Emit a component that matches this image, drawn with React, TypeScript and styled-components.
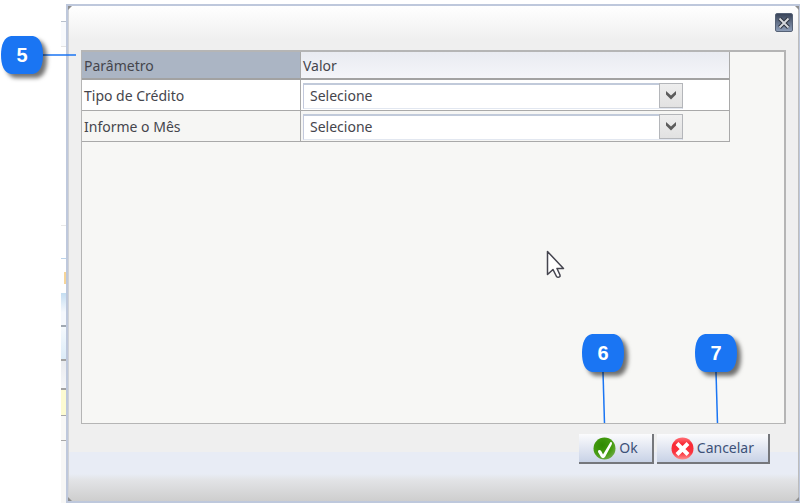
import React from "react";
import styled, { createGlobalStyle } from "styled-components";

const GlobalStyle = createGlobalStyle`
  *, *::before, *::after { box-sizing: border-box; }
  body {
    margin: 0;
    background: #ffffff;
    color: #45454c;
    font-family: "Noto Sans", "Open Sans", sans-serif;
    font-size: 14px;
    line-height: 20px;
  }
  button, select { font: inherit; color: inherit; }
`;

const Page = styled.div`
  position: relative;
  display: flex;
  min-height: 100vh;
  padding-left: 61px;
  overflow: hidden;
`;

const Backdrop = styled.div`
  display: flex;
  flex-direction: column;
  flex: 0 0 5px;
`;

const Slice = styled.div<{ $height?: number; $fill: string; $edge: string; $weight?: number }>`
  ${(p) => (p.$height ? `flex: 0 0 ${p.$height}px;` : "flex: 1;")}
  background: ${(p) => p.$fill};
  border-bottom: ${(p) => p.$weight ?? 1}px solid ${(p) => p.$edge};
`;

const DialogFrame = styled.section`
  position: relative;
  display: flex;
  flex-direction: column;
  flex: 1;
  min-width: 0;
  margin-top: 4px;
  border: solid #bec8dc;
  border-width: 2px 1px 2px 2px;
  box-shadow: inset 1px 0 #d0d2d6, inset -1px 0 #bdbdbd;
  background:
    linear-gradient(#ffffff, #efefef) top / 100% 34px no-repeat,
    linear-gradient(#e8ecf5, #e8ecf5 22px, #e2e3e6 28px, #cecece) bottom / 100% 49px no-repeat,
    #efefef;
`;

const DialogHeader = styled.header`
  display: flex;
  justify-content: flex-end;
  height: 44px;
  padding: 7px 6px;
`;

const CloseButton = styled.button`
  display: grid;
  place-items: center;
  width: 18px;
  height: 19px;
  padding: 0;
  border: 1px solid #566276;
  border-radius: 2px;
  background: linear-gradient(#394459, #8d9db7);
`;

const Panel = styled.div`
  flex: 1;
  margin: 0 13px;
  border: solid #b5b5b5;
  border-width: 2px 2px 1px 1px;
  background: #f7f7f5;
`;

const ParamTable = styled.table`
  width: calc(100% - 54px);
  border-collapse: separate;
  border-spacing: 0;
  table-layout: fixed;
`;

const HeadCell = styled.th<{ $selected?: boolean }>`
  width: ${(p) => (p.$selected ? "219px" : "auto")};
  height: 28px;
  padding: 2px 2px 0;
  border-right: 1px solid #a9a9a9;
  border-bottom: 2px solid #a2a2a2;
  background: ${(p) => (p.$selected ? "#abb5c4" : "linear-gradient(#e9ebf1, #f4f5f9)")};
  font-weight: 400;
  text-align: left;
`;

const Row = styled.tr<{ $plain?: boolean }>`
  background: ${(p) => (p.$plain ? "#f6f6f4" : "#ffffff")};
`;

const Cell = styled.td`
  height: 31px;
  padding: 2px 2px 1px;
  border-right: 1px solid #a9a9a9;
  border-bottom: 1px solid #a9a9a9;
`;

const SelectShell = styled.div`
  display: grid;
  grid-template-columns: 1fr 24px;
  width: calc(100% - 44px);
  height: 26px;
`;

const Select = styled.select`
  grid-area: 1 / 1 / 2 / 3;
  min-width: 0;
  height: 26px;
  padding: 0 28px 0 6px;
  border: 1px solid #c3c9dc;
  border-top: 2px solid #c1cada;
  border-bottom-color: #e2e7f0;
  border-radius: 0;
  background: #ffffff;
  appearance: none;
`;

const SelectArrow = styled.span`
  grid-area: 1 / 2 / 2 / 3;
  z-index: 1;
  display: grid;
  place-items: center;
  height: 25px;
  border: 1px solid #b4b6ba;
  background: linear-gradient(#eeeeee, #e2e2e2);
  pointer-events: none;
`;

const DialogFooter = styled.footer`
  display: flex;
  justify-content: flex-end;
  gap: 3px;
  padding: 10px 29px 37px;
`;

const ActionButton = styled.button`
  display: flex;
  align-items: center;
  gap: 3px;
  height: 30px;
  padding: 0 14px;
  border: solid #75777c;
  border-width: 0 2px 2px 0;
  background: linear-gradient(#fbfbfd, #c8d2e6);
  color: #3d5178;
`;

const Corner = styled.svg<{ $right?: boolean; $bottom?: boolean }>`
  position: absolute;
  ${(p) => (p.$right ? "right: 0;" : "left: 0;")}
  ${(p) => (p.$bottom ? "bottom: 0;" : "top: 0;")}
  transform: scale(${(p) => (p.$right ? -1 : 1)}, ${(p) => (p.$bottom ? -1 : 1)});
`;

const Callout = styled.div<{ $top: number; $left?: number; $right?: number; $across?: boolean }>`
  position: absolute;
  top: ${(p) => p.$top}px;
  ${(p) => (p.$right !== undefined ? `right: ${p.$right}px;` : `left: ${p.$left}px;`)}
  display: flex;
  flex-direction: ${(p) => (p.$across ? "row" : "column")};
  align-items: center;
  pointer-events: none;
`;

const Badge = styled.span`
  display: grid;
  place-items: center;
  width: 42px;
  height: 38px;
  color: #ffffff;
  font: 700 20px/24px "Liberation Sans", Arial, sans-serif;

  > * { grid-area: 1 / 1; }
  > svg { overflow: visible; filter: drop-shadow(4px 4px 2px rgba(0, 0, 0, 0.55)); }
  > span { z-index: 1; }
`;

const Pointer = styled.svg`
  position: absolute;
  top: 250px;
  right: 235px;
  pointer-events: none;
`;

function CornerMark(props: { right?: boolean; bottom?: boolean }) {
  return (
    <Corner $right={props.right} $bottom={props.bottom} width="5" height="5" aria-hidden="true">
      <path d="M0 0H4L0 4Z" fill="#8e8e8e" />
    </Corner>
  );
}

function Marker({ label }: { label: string }) {
  return (
    <Badge>
      <svg width="42" height="38" aria-hidden="true">
        <path d="M10 0H32C39 1 42 9 42 19S39 37 32 38H10C3 37 0 29 0 19S3 1 10 0Z" fill="#1a75f3" />
      </svg>
      <span>{label}</span>
    </Badge>
  );
}

function OkIcon() {
  return (
    <svg width="23" height="23" viewBox="0 0 23 23" aria-hidden="true">
      <defs>
        <radialGradient id="green" cx="0.4" cy="0.35" r="0.65">
          <stop offset="0" stopColor="#2f8a00" />
          <stop offset="0.7" stopColor="#469c12" />
          <stop offset="1" stopColor="#67a83c" />
        </radialGradient>
      </defs>
      <circle cx="11.5" cy="11.5" r="11" fill="url(#green)" />
      <path d="M17.500 5C19 4.500 19.500 6 18.500 8L12 20C11 21.500 9 21.500 8 20L5 15C5 12.500 7 12.500 8.500 14.500L10 17.500Z" fill="#fff" />
    </svg>
  );
}

function CancelIcon() {
  return (
    <svg width="23" height="23" viewBox="0 0 23 23" aria-hidden="true">
      <defs>
        <linearGradient id="red" x1="0" y1="0" x2="0" y2="1">
          <stop offset="0" stopColor="#ff7077" />
          <stop offset="0.3" stopColor="#f92834" />
          <stop offset="0.7" stopColor="#fa3540" />
          <stop offset="1" stopColor="#ff9090" />
        </linearGradient>
      </defs>
      <circle cx="11.5" cy="11.5" r="11" fill="url(#red)" />
      <path d="M6 6.500L17 17.500M17 6.500L6 17.500" stroke="#fff" strokeWidth="4" />
    </svg>
  );
}

const params = [
  { id: "tipo-credito", label: "Tipo de Crédito" },
  { id: "informe-mes", label: "Informe o Mês" },
];

export default function App() {
  return (
    <>
      <GlobalStyle />
      <Page>
        <Backdrop aria-hidden="true">
          <Slice $height={22} $fill="#ffffff" $edge="#b8c0cc" />
          <Slice $height={25} $fill="#f8fafd" $edge="#e4e4e4" />
          <Slice $height={179} $fill="#ffffff" $edge="#e8e8e8" />
          <Slice $height={33} $fill="#ffffff" $edge="#bcd3ea" />
          <Slice $height={13} $fill="#ffffff" $edge="#ffffff" />
          <Slice $height={13} $fill="linear-gradient(90deg, #fff 3px, #f6d59a 3px)" $edge="#ffffff" />
          <Slice $height={8} $fill="#ffffff" $edge="#ffffff" />
          <Slice $height={34} $fill="linear-gradient(#c4ddf1, #f5f8fd 60%)" $edge="#a0a8b2" $weight={2} />
          <Slice $height={34} $fill="linear-gradient(#f5f9fd, #dcecf8)" $edge="#a2a2a2" $weight={2} />
          <Slice $height={29} $fill="linear-gradient(#e9ebef, #f5f6f9)" $edge="#a2a2a2" $weight={2} />
          <Slice $height={26} $fill="#fdfbd2" $edge="#a9a9a9" />
          <Slice $height={25} $fill="#f8f8f7" $edge="#a9a9a9" />
          <Slice $fill="#f7f7f6" $edge="#f7f7f6" />
        </Backdrop>

        <DialogFrame role="dialog" aria-label="Parâmetros">
          <CornerMark />
          <CornerMark right />
          <CornerMark bottom />
          <CornerMark right bottom />
          <DialogHeader>
            <CloseButton type="button" aria-label="Fechar">
              <svg width="14" height="14" viewBox="0 0 14 14" aria-hidden="true">
                <path d="M2.500 2.500L11.500 11.500M11.500 2.500L2.500 11.500" stroke="#303642" strokeWidth="4" />
                <path d="M2.500 2.500L11.500 11.500M11.500 2.500L2.500 11.500" stroke="#d8dade" strokeWidth="1.8" />
              </svg>
            </CloseButton>
          </DialogHeader>

          <Panel>
            <ParamTable>
              <thead>
                <tr>
                  <HeadCell $selected scope="col">Parâmetro</HeadCell>
                  <HeadCell scope="col">Valor</HeadCell>
                </tr>
              </thead>
              <tbody>
                {params.map((param, index) => (
                  <Row key={param.id} $plain={index % 2 === 1}>
                    <Cell>
                      <label htmlFor={param.id}>{param.label}</label>
                    </Cell>
                    <Cell>
                      <SelectShell>
                        <Select id={param.id}>
                          <option>Selecione</option>
                        </Select>
                        <SelectArrow aria-hidden="true">
                          <svg width="12" height="10" viewBox="0 0 12 10">
                            <path d="M1 1L6 5.500L11 1V4.500L6 9.500L1 4.500Z" fill="#5c5c5c" />
                          </svg>
                        </SelectArrow>
                      </SelectShell>
                    </Cell>
                  </Row>
                ))}
              </tbody>
            </ParamTable>
          </Panel>

          <DialogFooter>
            <ActionButton type="button">
              <OkIcon />
              Ok
            </ActionButton>
            <ActionButton type="button">
              <CancelIcon />
              Cancelar
            </ActionButton>
          </DialogFooter>
        </DialogFrame>

        <Callout $top={36} $left={1} $across>
          <Marker label="5" />
          <svg width="33" height="2" aria-hidden="true">
            <path d="M0 1H33" stroke="#1a75f3" strokeWidth="1.5" />
          </svg>
        </Callout>
        <Callout $top={334} $right={176}>
          <Marker label="6" />
          <svg width="6" height="51" aria-hidden="true">
            <path d="M3 0L4.500 51" stroke="#1a75f3" strokeWidth="1.5" />
          </svg>
        </Callout>
        <Callout $top={334} $right={63}>
          <Marker label="7" />
          <svg width="6" height="51" aria-hidden="true">
            <path d="M3 0L4.500 51" stroke="#1a75f3" strokeWidth="1.5" />
          </svg>
        </Callout>

        <Pointer width="19" height="29" viewBox="0 0 19 29" aria-hidden="true">
          <path
            d="M1.500 1.500V24.500L7 19.500L10.500 26.500Q12 28 14 26.500L14 25L11 18.500H17.500Z"
            fill="#fff"
            stroke="#45454f"
            strokeWidth="1.5"
            strokeLinejoin="round"
          />
        </Pointer>
      </Page>
    </>
  );
}
